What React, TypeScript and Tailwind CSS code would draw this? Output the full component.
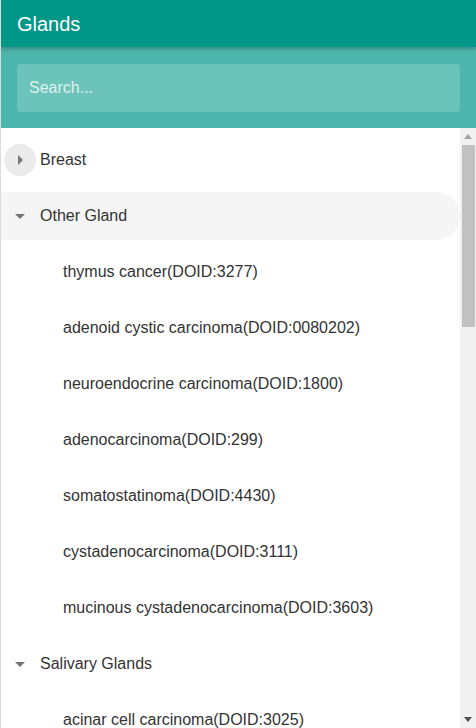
import { useState } from "react";

type Group = { name: string; open: boolean; items: string[] };

const groups: Group[] = [
  { name: "Breast", open: false, items: [] },
  {
    name: "Other Gland",
    open: true,
    items: [
      "thymus cancer(DOID:3277)",
      "adenoid cystic carcinoma(DOID:0080202)",
      "neuroendocrine carcinoma(DOID:1800)",
      "adenocarcinoma(DOID:299)",
      "somatostatinoma(DOID:4430)",
      "cystadenocarcinoma(DOID:3111)",
      "mucinous cystadenocarcinoma(DOID:3603)",
    ],
  },
  { name: "Salivary Glands", open: true, items: ["acinar cell carcinoma(DOID:3025)"] },
];

function Caret({ open }: { open: boolean }) {
  return (
    <svg width="10" height="10" viewBox="0 0 10 10" className="text-[#757575]">
      {open ? <path d="M0 3h10L5 8z" fill="currentColor" /> : <path d="M3 0v10l5-5z" fill="currentColor" />}
    </svg>
  );
}

export default function App() {
  const [query, setQuery] = useState("");

  return (
    <div className="w-[476px] h-[728px] overflow-hidden bg-white border-l border-[#dcdcdc] flex flex-col font-['Liberation_Sans',Arial,sans-serif]">
      <div className="h-[47px] shrink-0 bg-[#009688] flex items-center px-4 text-white text-[20px] shadow-[0_2px_4px_rgba(0,0,0,0.25)] relative z-10">
        Glands
      </div>
      <div className="h-[81px] shrink-0 bg-[#4db6ac] px-4 pt-[17px]">
        <input
          value={query}
          onChange={(e) => setQuery(e.target.value)}
          placeholder="Search..."
          className="w-full h-[48px] rounded bg-[#6cc3b9] px-3 text-[16px] text-white placeholder:text-[#dff2ef] outline-none"
        />
      </div>
      <div className="flex-1 flex min-h-0">
        <div className="flex-1 pt-[4px] text-[16px] text-[#333]">
          {groups.map((g, gi) => (
            <div key={g.name}>
              <div className="h-[56px] flex items-center">
                <div
                  className={
                    g.name === "Other Gland"
                      ? "w-full h-[48px] flex items-center bg-[#f5f5f5] rounded-r-full"
                      : "w-full h-[48px] flex items-center"
                  }
                >
                  <span
                    className={
                      gi === 0
                        ? "ml-[3px] w-[32px] h-[32px] rounded-full bg-[#ebebeb] flex items-center justify-center"
                        : "ml-[3px] w-[32px] h-[32px] rounded-full flex items-center justify-center"
                    }
                  >
                    <Caret open={g.open} />
                  </span>
                  <span className="ml-[4px]">{g.name}</span>
                </div>
              </div>
              {g.open &&
                g.items.map((it) => (
                  <div key={it} className="h-[56px] flex items-center pl-[62px]">
                    {it}
                  </div>
                ))}
            </div>
          ))}
        </div>
        <div className="w-[16px] shrink-0 bg-[#f1f1f1] flex flex-col items-center">
          <div className="h-[17px] flex items-center justify-center">
            <svg width="8" height="5" viewBox="0 0 8 5"><path d="M0 5h8L4 0z" fill="#a3a3a3" /></svg>
          </div>
          <div className="w-[13px] h-[182px] bg-[#c1c1c1]" />
          <div className="flex-1" />
          <div className="h-[17px] flex items-center justify-center">
            <svg width="8" height="5" viewBox="0 0 8 5"><path d="M0 0h8L4 5z" fill="#505050" /></svg>
          </div>
        </div>
      </div>
    </div>
  );
}
